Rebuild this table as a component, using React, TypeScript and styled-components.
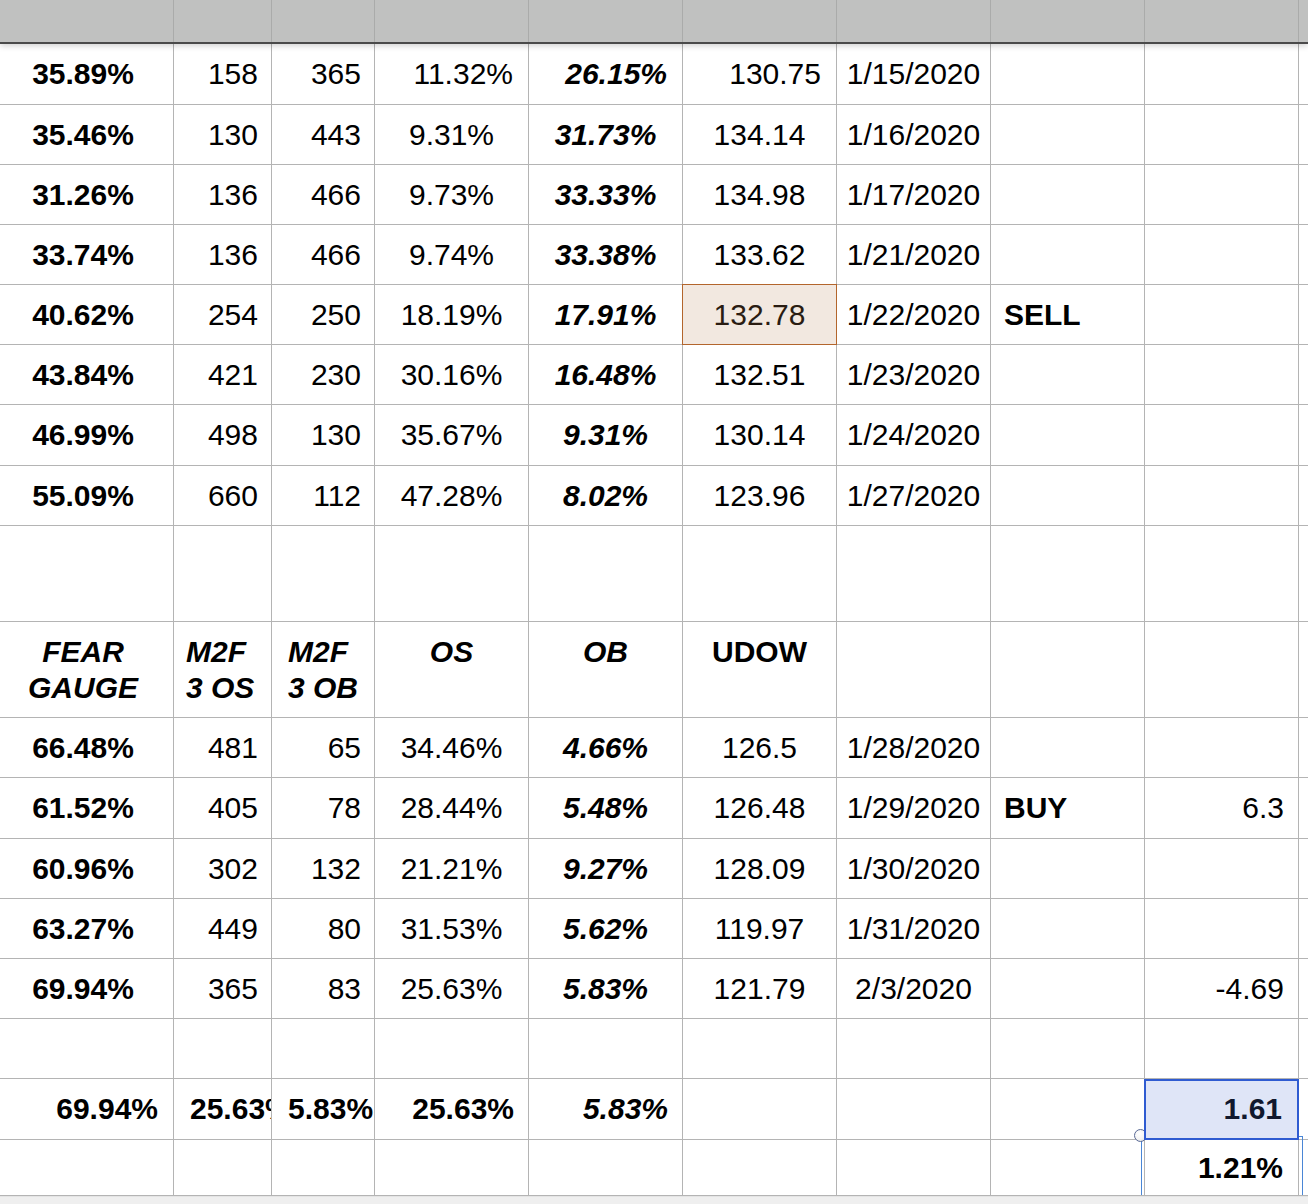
import React from "react";
import styled, { createGlobalStyle, css } from "styled-components";

const GlobalStyle = createGlobalStyle`
  html, body { margin: 0; padding: 0; background: #ffffff; }
  body { font-family: "Liberation Sans", Arial, Helvetica, sans-serif; overflow: hidden; }
`;

const COLS = "174px 98px 103px 154px 154px 154px 154px 154px 154px 1fr";

const Page = styled.div`
  width: 1308px;
  height: 1204px;
  display: flex;
  flex-direction: column;
  overflow: hidden;
  background: #ffffff;
`;

const TopBar = styled.div`
  position: relative;
  z-index: 2;
  display: grid;
  grid-template-columns: ${COLS};
  height: 42px;
  background: #c0c1c0;
  border-bottom: 2px solid #4a4a4a;
  box-shadow: 0 2px 6px rgba(0, 0, 0, 0.18);
  flex-shrink: 0;
`;

const TopCell = styled.div`
  border-right: 1px solid #aaabaa;
  &:last-child { border-right: none; }
`;

const Sheet = styled.div`
  display: flex;
  flex-direction: column;
  flex-shrink: 0;
`;

const Row = styled.div<{ $h: number }>`
  display: grid;
  grid-template-columns: ${COLS};
  height: ${(p) => p.$h}px;
  flex-shrink: 0;
`;

type Align = "left" | "center" | "right";

interface CellStyle {
  align?: Align;
  pad?: number;
  bold?: boolean;
  italic?: boolean;
  top?: boolean;
  mark?: "sell" | "picked" | "range";
}

const Cell = styled.div<{
  $align: Align;
  $pad: number;
  $bold: boolean;
  $italic: boolean;
  $top: boolean;
  $mark?: string;
}>`
  position: relative;
  box-sizing: border-box;
  display: flex;
  align-items: ${(p) => (p.$top ? "flex-start" : "center")};
  justify-content: ${(p) =>
    p.$align === "left" ? "flex-start" : p.$align === "right" ? "flex-end" : "center"};
  text-align: ${(p) => p.$align};
  ${(p) =>
    p.$align === "left"
      ? css`padding-left: ${p.$pad}px;`
      : css`padding-right: ${p.$pad}px;`}
  ${(p) => p.$top && css`padding-top: 12px;`}
  border-right: 1px solid #b4b4b4;
  border-bottom: 1px solid #b4b4b4;
  font-size: 30px;
  line-height: 36px;
  color: #000000;
  font-weight: ${(p) => (p.$bold ? 700 : 400)};
  font-style: ${(p) => (p.$italic ? "italic" : "normal")};
  white-space: pre;
  overflow: hidden;
  &:last-child { border-right: none; }

  ${(p) =>
    p.$mark === "sell" &&
    css`
      overflow: visible;
      background: #f2e8e0;
      color: #2a1c12;
      &::after {
        content: "";
        position: absolute;
        left: -1px;
        top: -1px;
        right: -1px;
        bottom: -1px;
        border: 1.5px solid #b3652c;
        pointer-events: none;
      }
    `}
  ${(p) =>
    p.$mark === "picked" &&
    css`
      overflow: visible;
      background: #dfe5f7;
      color: #11182e;
      z-index: 2;
      &::after {
        content: "";
        position: absolute;
        left: -1px;
        top: 0;
        right: -1px;
        bottom: -1px;
        border: 2px solid #2f5bd1;
        pointer-events: none;
      }
    `}
  ${(p) =>
    p.$mark === "range" &&
    css`
      overflow: visible;
      z-index: 1;
      &::after {
        content: "";
        position: absolute;
        left: -4px;
        top: -4px;
        right: -5px;
        bottom: 0;
        border: 1.5px solid #4a86d6;
        border-bottom: none;
        pointer-events: none;
      }
    `}
`;

const Handle = styled.span`
  position: absolute;
  left: -11px;
  top: -11px;
  width: 11px;
  height: 11px;
  border-radius: 50%;
  border: 1.5px solid #5a6a96;
  background: radial-gradient(circle at 40% 35%, #ffffff 0%, #f4f4f4 55%, #d4d4d4 100%);
  z-index: 3;
`;

const BottomBar = styled.div`
  flex: 1;
  background: #efefef;
  border-top: 1px solid #e4e4e4;
`;

type CellDef = { t: string; s?: CellStyle; handle?: boolean };

const colBase: CellStyle[] = [
  { align: "center", pad: 7, bold: true },
  { align: "right", pad: 13 },
  { align: "right", pad: 13 },
  { align: "center", pad: 0 },
  { align: "center", pad: 0, bold: true, italic: true },
  { align: "center", pad: 0 },
  { align: "center", pad: 0 },
  { align: "left", pad: 13, bold: true },
  { align: "right", pad: 14 },
  { align: "left", pad: 0 },
];

const dataRow = (vals: string[], over: Record<number, CellStyle> = {}): CellDef[] =>
  colBase.map((base, i) => ({ t: vals[i] ?? "", s: { ...base, ...(over[i] || {}) } }));

const right15: CellStyle = { align: "right", pad: 15 };

const emptyRow = (): CellDef[] => colBase.map((b) => ({ t: "", s: b }));

const rows: { h: number; cells: CellDef[] }[] = [
  { h: 61, cells: dataRow(["35.89%", "158", "365", "11.32%", "26.15%", "130.75", "1/15/2020"], { 3: right15, 4: right15, 5: right15 }) },
  { h: 60, cells: dataRow(["35.46%", "130", "443", "9.31%", "31.73%", "134.14", "1/16/2020"]) },
  { h: 60, cells: dataRow(["31.26%", "136", "466", "9.73%", "33.33%", "134.98", "1/17/2020"]) },
  { h: 60, cells: dataRow(["33.74%", "136", "466", "9.74%", "33.38%", "133.62", "1/21/2020"]) },
  { h: 60, cells: dataRow(["40.62%", "254", "250", "18.19%", "17.91%", "132.78", "1/22/2020", "SELL"], { 5: { mark: "sell" } }) },
  { h: 60, cells: dataRow(["43.84%", "421", "230", "30.16%", "16.48%", "132.51", "1/23/2020"]) },
  { h: 61, cells: dataRow(["46.99%", "498", "130", "35.67%", "9.31%", "130.14", "1/24/2020"]) },
  { h: 60, cells: dataRow(["55.09%", "660", "112", "47.28%", "8.02%", "123.96", "1/27/2020"]) },
  { h: 96, cells: emptyRow() },
  {
    h: 96,
    cells: dataRow(["FEAR\nGAUGE", "M2F\n3 OS", "M2F\n3 OB", "OS", "OB", "UDOW"], {
      0: { align: "center", pad: 7, bold: true, italic: true, top: true },
      1: { align: "left", pad: 12, bold: true, italic: true, top: true },
      2: { align: "left", pad: 16, bold: true, italic: true, top: true },
      3: { align: "center", pad: 0, bold: true, italic: true, top: true },
      4: { align: "center", pad: 0, bold: true, italic: true, top: true },
      5: { align: "center", pad: 0, bold: true, top: true },
    }),
  },
  { h: 60, cells: dataRow(["66.48%", "481", "65", "34.46%", "4.66%", "126.5", "1/28/2020"]) },
  { h: 61, cells: dataRow(["61.52%", "405", "78", "28.44%", "5.48%", "126.48", "1/29/2020", "BUY", "6.3"]) },
  { h: 60, cells: dataRow(["60.96%", "302", "132", "21.21%", "9.27%", "128.09", "1/30/2020"]) },
  { h: 60, cells: dataRow(["63.27%", "449", "80", "31.53%", "5.62%", "119.97", "1/31/2020"]) },
  { h: 60, cells: dataRow(["69.94%", "365", "83", "25.63%", "5.83%", "121.79", "2/3/2020", "", "-4.69"]) },
  { h: 60, cells: emptyRow() },
  {
    h: 61,
    cells: dataRow(["69.94%", "25.63%", "5.83%", "25.63%", "5.83%", "", "", "", "1.61"], {
      0: { align: "right", pad: 15, bold: true },
      1: { align: "left", pad: 16, bold: true },
      2: { align: "left", pad: 16, bold: true },
      3: { align: "right", pad: 14, bold: true },
      4: { align: "right", pad: 14, bold: true, italic: true },
      8: { align: "right", pad: 16, bold: true, mark: "picked" },
    }),
  },
  {
    h: 56,
    cells: (() => {
      const r = dataRow(["", "", "", "", "", "", "", "", "1.21%"], {
        8: { align: "right", pad: 15, bold: true, mark: "range" },
      });
      r[8].handle = true;
      return r;
    })(),
  },
];

export default function App() {
  return (
    <Page>
      <GlobalStyle />
      <TopBar>
        {Array.from({ length: 10 }).map((_, i) => (
          <TopCell key={i} />
        ))}
      </TopBar>
      <Sheet>
        {rows.map((r, ri) => (
          <Row key={ri} $h={r.h}>
            {r.cells.map((c, ci) => {
              const s = c.s || {};
              return (
                <Cell
                  key={ci}
                  $align={s.align || "left"}
                  $pad={s.pad ?? 0}
                  $bold={!!s.bold}
                  $italic={!!s.italic}
                  $top={!!s.top}
                  $mark={s.mark}
                >
                  {c.handle && <Handle />}
                  {c.t}
                </Cell>
              );
            })}
          </Row>
        ))}
      </Sheet>
      <BottomBar />
    </Page>
  );
}
